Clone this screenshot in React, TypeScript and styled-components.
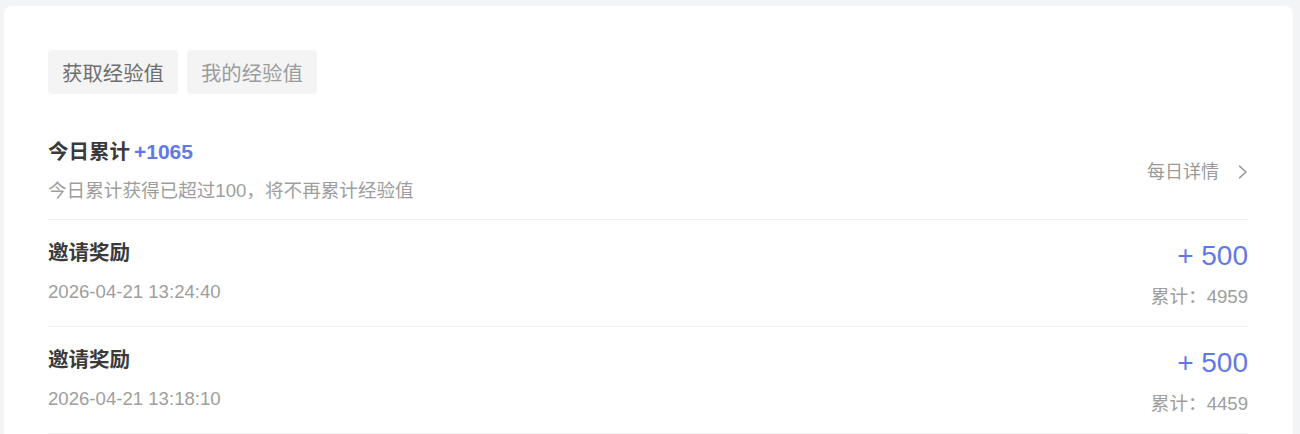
import React from "react";
import styled, { createGlobalStyle } from "styled-components";

const GlobalStyle = createGlobalStyle`
  html, body {
    margin: 0;
    padding: 0;
    background: #f3f4f6;
  }
  body {
    font-family: "Liberation Sans", "Noto Sans CJK SC", sans-serif;
  }
`;

const Page = styled.div`
  padding: 6px 7px 0 4px;
  height: 434px;
  box-sizing: border-box;
  overflow: hidden;
`;

const Card = styled.div`
  background: #ffffff;
  border-radius: 8px;
  padding: 44px 45px 0 44px;
  min-height: 600px;
  box-sizing: border-box;
`;

const TabBar = styled.div`
  display: flex;
  gap: 9px;
  margin-bottom: 24px;
`;

const Tab = styled.div<{ $active?: boolean }>`
  height: 44px;
  padding: 0 14px;
  display: flex;
  align-items: center;
  background: #f4f4f5;
  border-radius: 4px;
  font-size: 20.4px;
  color: ${(p) => (p.$active ? "#6e6e6e" : "#9c9c9c")};
`;

const Row = styled.div<{ $pt: number; $pb: number; $center?: boolean }>`
  display: flex;
  justify-content: space-between;
  align-items: ${(p) => (p.$center ? "center" : "flex-start")};
  padding: ${(p) => p.$pt}px 0 ${(p) => p.$pb}px;
  border-bottom: 1px solid #f0f0f0;
`;

const Col = styled.div<{ $gap: number; $right?: boolean }>`
  display: flex;
  flex-direction: column;
  gap: ${(p) => p.$gap}px;
  align-items: ${(p) => (p.$right ? "flex-end" : "flex-start")};
`;

const Title = styled.div`
  font-size: 20.5px;
  line-height: 24px;
  font-weight: 700;
  color: #3a3a3a;
`;

const Blue = styled.span`
  color: #5f79e6;
  margin-left: 4px;
  font-size: 21px;
`;

const Sub = styled.div`
  font-size: 18.6px;
  line-height: 24px;
  color: #9e9e9e;
`;

const Detail = styled.div`
  display: flex;
  align-items: center;
  font-size: 18px;
  line-height: 24px;
  color: #9a9a9a;
  svg {
    margin-left: 19px;
  }
`;

const Amount = styled.div`
  font-size: 28px;
  line-height: 30px;
  color: #5f79e6;
`;

const records = [
  { time: "2026-04-21 13:24:40", total: 4959 },
  { time: "2026-04-21 13:18:10", total: 4459 },
];

export default function App() {
  return (
    <>
      <GlobalStyle />
      <Page>
        <Card>
          <TabBar>
            <Tab $active>获取经验值</Tab>
            <Tab>我的经验值</Tab>
          </TabBar>
          <Row $pt={22} $pb={16} $center>
            <Col $gap={15}>
              <Title>
                今日累计<Blue>+1065</Blue>
              </Title>
              <Sub>今日累计获得已超过100，将不再累计经验值</Sub>
            </Col>
            <Detail>
              每日详情
              <svg width="10" height="14" viewBox="0 0 10 14">
                <polyline
                  points="1.5,1.2 8,7 1.5,12.8"
                  fill="none"
                  stroke="#9a9a9a"
                  strokeWidth="1.6"
                  strokeLinecap="round"
                  strokeLinejoin="round"
                />
              </svg>
            </Detail>
          </Row>
          {records.map((r) => (
            <Row key={r.time} $pt={21} $pb={17}>
              <Col $gap={15}>
                <Title>邀请奖励</Title>
                <Sub>{r.time}</Sub>
              </Col>
              <Col $gap={14} $right>
                <Amount>+ 500</Amount>
                <Sub>累计：{r.total}</Sub>
              </Col>
            </Row>
          ))}
        </Card>
      </Page>
    </>
  );
}
